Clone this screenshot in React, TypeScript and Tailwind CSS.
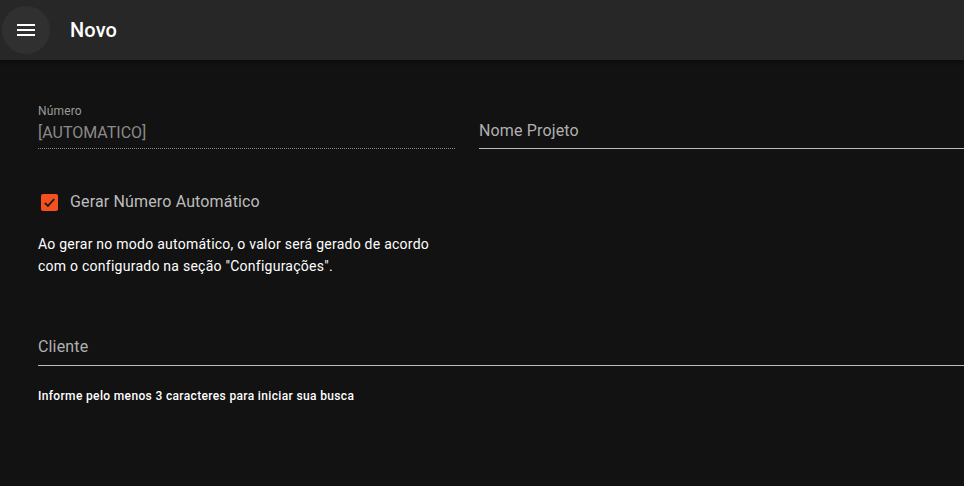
export default function App() {
  return (
    <div className="min-h-[486px] w-full overflow-hidden bg-[#121212] font-['Roboto',sans-serif] text-white">
      <header className="flex h-[60px] items-center bg-[#272727] pl-[2px] shadow-[0_2px_4px_rgba(0,0,0,0.4)]">
        <button
          type="button"
          className="flex h-12 w-12 items-center justify-center rounded-full bg-[#303030] text-white"
          aria-label="menu"
        >
          <svg viewBox="0 0 24 24" className="h-6 w-6" fill="currentColor">
            <path d="M3 18h18v-2H3v2zm0-5h18v-2H3v2zm0-7v2h18V6H3z" />
          </svg>
        </button>
        <h1 className="ml-5 text-[20px] font-medium leading-none tracking-[0.15px]">Novo</h1>
      </header>

      <main className="pl-[38px] pt-[44px]">
        <div className="flex gap-6">
          <div className="w-[417px] shrink-0">
            <div className="border-b border-dotted border-[#8a8a8a] pb-[4px]">
              <p className="text-[12px] leading-[14px] tracking-[0.15px] text-[#9a9a9a]">Número</p>
              <p className="mt-[3px] text-[16px] leading-[23px] text-[#8a8a8a]">[AUTOMATICO]</p>
            </div>

            <label className="mt-[41px] flex items-center">
              <span className="ml-[3px] flex h-[17px] w-[17px] items-center justify-center rounded-[2px] bg-[#f4511e]">
                <svg viewBox="0 0 24 24" className="h-[15px] w-[15px]" fill="none">
                  <path d="M4.5 12.5l5 5 10-11" stroke="#1b1b1b" strokeWidth="2.8" />
                </svg>
              </span>
              <span className="ml-[12px] text-[16px] leading-6 tracking-[0.15px] text-[#bdbdbd]">
                Gerar Número Automático
              </span>
            </label>

            <p className="mt-[19px] text-[14px] leading-[22px] tracking-[0.25px] text-white">
              Ao gerar no modo automático, o valor será gerado de acordo com o configurado na seção "Configurações".
            </p>
          </div>

          <div className="min-w-0 flex-1 pt-[15px]">
            <div className="border-b border-[#bdbdbd] pb-[6px]">
              <p className="text-[16px] leading-[23px] tracking-[0.15px] text-[#b0b0b0]">Nome Projeto</p>
            </div>
          </div>
        </div>

        <div className="mt-[58px] border-b border-[#bdbdbd] pb-[6px]">
          <p className="text-[16px] leading-[24px] tracking-[0.15px] text-[#b0b0b0]">Cliente</p>
        </div>
        <p className="mt-[20px] text-[12px] font-medium leading-[20px] tracking-[0.35px] text-white">
          Informe pelo menos 3 caracteres para iniciar sua busca
        </p>
      </main>
    </div>
  );
}
